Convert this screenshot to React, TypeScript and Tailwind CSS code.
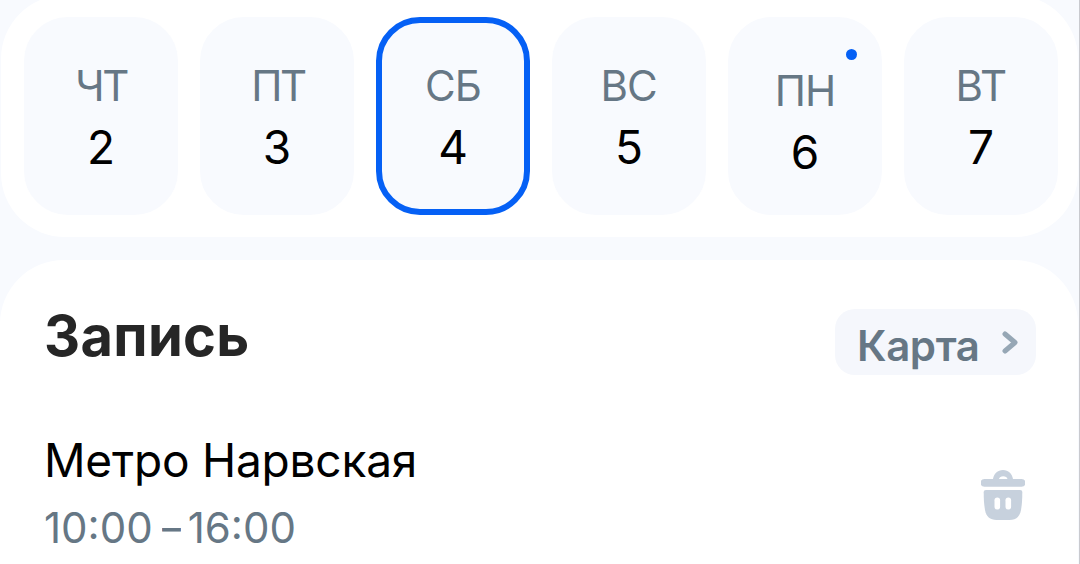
import { useState } from 'react';

type Day = {
  label: string;
  date: number;
  marked?: boolean;
  labelClass: string;
};

const days: Day[] = [
  { label: 'ЧТ', date: 2, labelClass: 'tracking-[-2.5px]' },
  { label: 'ПТ', date: 3, labelClass: 'tracking-[-2.5px] pl-[2px]' },
  { label: 'СБ', date: 4, labelClass: 'tracking-[-1px]' },
  { label: 'ВС', date: 5, labelClass: 'tracking-[-1px] pr-px' },
  { label: 'ПН', date: 6, marked: true, labelClass: 'tracking-[-1px]' },
  { label: 'ВТ', date: 7, labelClass: 'tracking-[-0.5px]' },
];

function TrashIcon() {
  return (
    <svg className="w-11 h-[50px]" viewBox="0 0 44 50" fill="none">
      <path
        fill="#C7D1DD"
        fillRule="evenodd"
        d="M12 9C13 3.500 16.500 0 22 0C27.500 0 31 3.500 32 9H40.500A3.800 3.800 0 0 1 40.500 16.800H3.500A3.800 3.800 0 0 1 3.500 9ZM18 9H26.500C26 7 24.500 6.200 22.200 6.200C20 6.200 18.500 7 18 9Z"
      />
      <path
        fill="#C7D1DD"
        d="M5 20H39C40.500 20 41.300 20.800 41.300 22.200C41.300 29 41 34 40 40C38.900 46.500 35 50 28.500 50H15.500C9 50 5.100 46.500 4 40C3 34 2.700 29 2.700 22.200C2.700 20.800 3.500 20 5 20Z"
      />
      <rect x="13.500" y="27.500" width="5.600" height="12" rx="2.800" fill="white" />
      <rect x="24.500" y="27.500" width="5.600" height="12" rx="2.800" fill="white" />
    </svg>
  );
}

export default function App() {
  const [selected, setSelected] = useState(4);

  return (
    <div className="h-[564px] w-[1080px] overflow-hidden border-r border-[#C9CACF] bg-[#F8FAFE] font-['Inter',sans-serif]">
      {/* Week strip */}
      <div className="-mt-[5px] ml-px mr-px flex h-[242px] gap-[22px] rounded-[64px] bg-white pl-[23px] pt-[22px]">
        {days.map((day) => (
          <button
            key={day.date}
            onClick={() => setSelected(day.date)}
            className={`relative flex h-[198px] w-[154px] shrink-0 flex-col items-center rounded-[44px] border-[6px] bg-[#F8FAFE] ${
              day.date === selected ? 'border-[#0560F5]' : 'border-[#F8FAFE]'
            } ${day.marked ? 'pt-[44px]' : 'pt-[39px]'}`}
          >
            {day.marked && <span className="absolute right-[19px] top-[26px] size-[11px] rounded-full bg-[#0560F5]" />}
            <span className={`text-[42px] leading-[48px] text-[#667785] ${day.labelClass}`}>{day.label}</span>
            <span className="mt-[9px] text-[46px] leading-[56px] text-black">{day.date}</span>
          </button>
        ))}
      </div>

      {/* Booking */}
      <div className="mr-px mt-[23px] h-[400px] rounded-[64px] bg-white pl-[44px] pr-[42px] pt-[49px]">
        <div className="flex items-start justify-between">
          <h1 className="mt-[-8px] text-[56px] font-bold leading-[70px] tracking-[0.3px] text-[#262626]">Запись</h1>
          <button className="flex h-[66px] w-[201px] items-center justify-between rounded-[20px] bg-[#F5F7FC] pl-[22px] pr-[18px]">
            <span className="mt-[7px] text-[42px] font-semibold leading-[50px] tracking-[-0.4px] text-[#667785]">Карта</span>
            <svg className="h-[23px] w-4" viewBox="0 0 16 23" fill="none">
              <path d="M3 3L13 11.500L3 20" stroke="#96A7B5" strokeWidth="5" strokeLinecap="round" strokeLinejoin="round" />
            </svg>
          </button>
        </div>

        <div className="mt-[57px] flex items-start justify-between pr-[11px]">
          <div>
            <div className="text-[46px] leading-[56px] tracking-[-0.2px] text-black">Метро Нарвская</div>
            <div className="mt-[15px] flex items-center text-[42px] leading-[50px] text-[#667785]">
              <span>10:00</span>
              <span className="ml-[8px] mr-[6px] inline-block origin-center scale-x-90">–</span>
              <span>16:00</span>
            </div>
          </div>
          <button className="mt-[38px]">
            <TrashIcon />
          </button>
        </div>
      </div>
    </div>
  );
}
